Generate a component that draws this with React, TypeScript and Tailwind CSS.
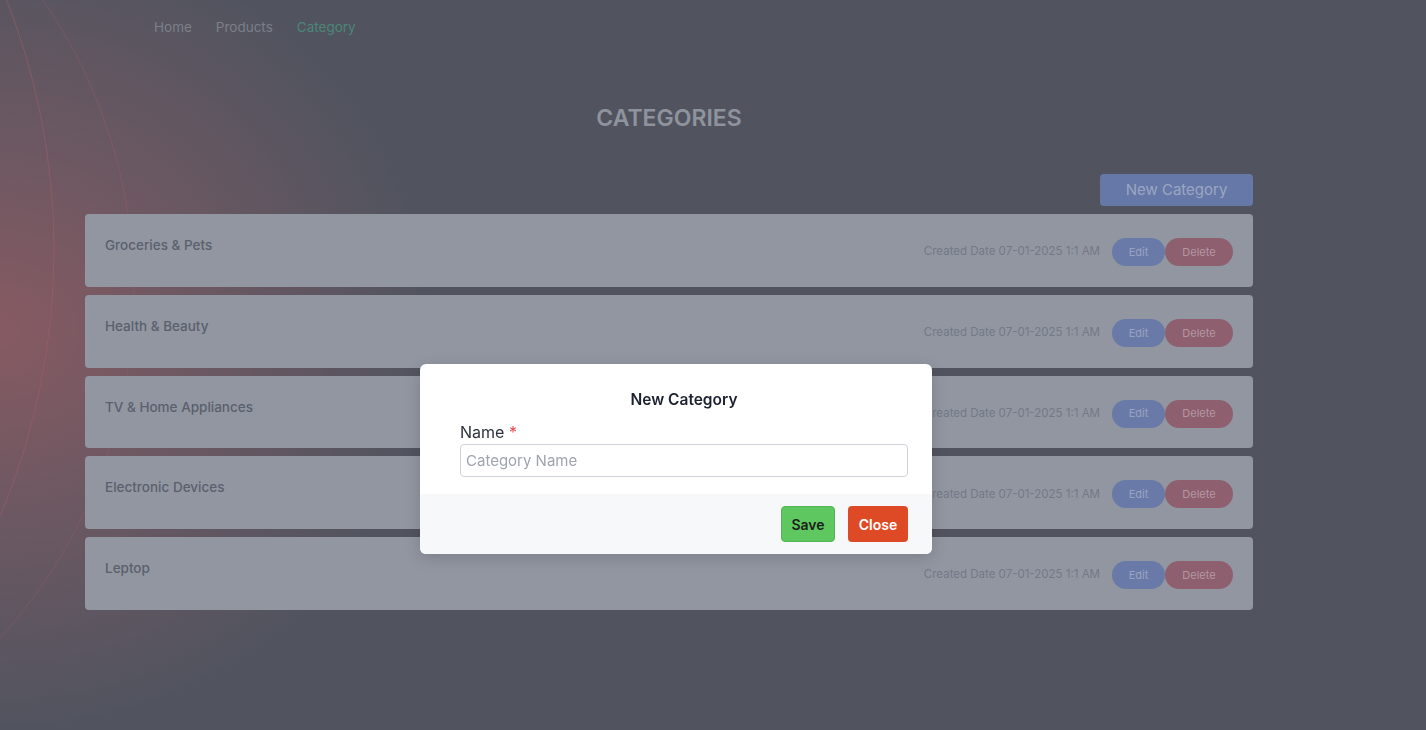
const categories = [
  'Groceries & Pets',
  'Health & Beauty',
  'TV & Home Appliances',
  'Electronic Devices',
  'Leptop',
]

function Arcs() {
  return (
    <svg className="pointer-events-none absolute left-0 top-0" width="300" height="730" fill="none">
      <circle cx="-630" cy="250" r="684" stroke="#a35d68" strokeOpacity="0.55" strokeWidth="1" />
      <circle cx="-380" cy="292" r="514" stroke="#a35d68" strokeOpacity="0.35" strokeWidth="1" />
    </svg>
  )
}

function CategoryCard({ name }: { name: string }) {
  return (
    <div className="flex h-[72.75px] items-start justify-between rounded-[4px] bg-[#9296a1] pl-5 pr-5 pt-[21px]">
      <h5 className="text-[13.5px] leading-5 font-medium text-[#5a606d]">{name}</h5>
      <div className="mt-[3px] flex items-center">
        <span className="mr-3 text-[11.5px] text-[#737987]">Created Date 07-01-2025 1:1 AM</span>
        <button className="h-7 w-[53px] rounded-full bg-[#6a7aa8] text-[11px] text-[#98a3c2]">Edit</button>
        <button className="h-7 w-[68px] rounded-full bg-[#8e5f6f] text-[11px] text-[#b497a3]">Delete</button>
      </div>
    </div>
  )
}

export default function App() {
  return (
    <div
      className="relative min-h-screen overflow-hidden bg-[#51545f] bg-[radial-gradient(ellipse_430px_400px_at_0px_330px,#875a62_0%,#6d5862_45%,#51545f_100%)] font-['Inter',sans-serif]"
    >
      <Arcs />

      <nav className="relative flex h-[54px] items-center gap-6 pl-[154px] text-[13.5px]">
        <a className="text-[#7b7f89]">Home</a>
        <a className="text-[#7b7f89]">Products</a>
        <a className="text-[#4c8677]">Category</a>
      </nav>

      <main className="relative ml-[85px] w-[1168px]">
        <h1 className="mt-[50px] text-center text-[23px] leading-7 font-semibold text-[#8e939e]">CATEGORIES</h1>

        <div className="mt-[42px] mb-2 flex justify-end">
          <button className="h-8 w-[153px] rounded-[4px] bg-[#6678a8] text-[15px] text-[#9ba6c2]">New Category</button>
        </div>

        <div className="flex flex-col gap-2">
          {categories.map((c) => (
            <CategoryCard key={c} name={c} />
          ))}
        </div>
      </main>

      <div className="fixed left-[420px] top-[364px] w-[512px] overflow-hidden rounded-[6px] bg-white shadow-[0_4px_16px_rgba(0,0,0,0.15)]">
        <div className="pl-10 pr-6 pt-[26px] pb-[17px]">
          <h2 className="text-center text-[15.5px] leading-5 font-semibold text-[#1d2130]">New Category</h2>
          <label className="mt-[10px] block text-[16px] leading-6 text-[#2d313b]">
            Name <span className="text-[#e5484d]">*</span>
          </label>
          <input
            className="block h-[33px] w-full rounded-[4px] border border-[#cfd2d8] px-[5px] text-[15px] text-[#333] outline-none placeholder:text-[#a0a4ad]"
            placeholder="Category Name"
          />
        </div>
        <div className="flex h-[60px] items-center justify-end gap-[13px] bg-[#f7f8fa] pr-6">
          <button className="h-9 w-[54px] rounded-[4px] border border-[#52b654] bg-[#5fc760] text-[14px] font-semibold text-[#1a1f1a]">
            Save
          </button>
          <button className="h-9 w-[60px] rounded-[4px] bg-[#de4a26] text-[14px] font-semibold text-white">Close</button>
        </div>
      </div>
    </div>
  )
}
